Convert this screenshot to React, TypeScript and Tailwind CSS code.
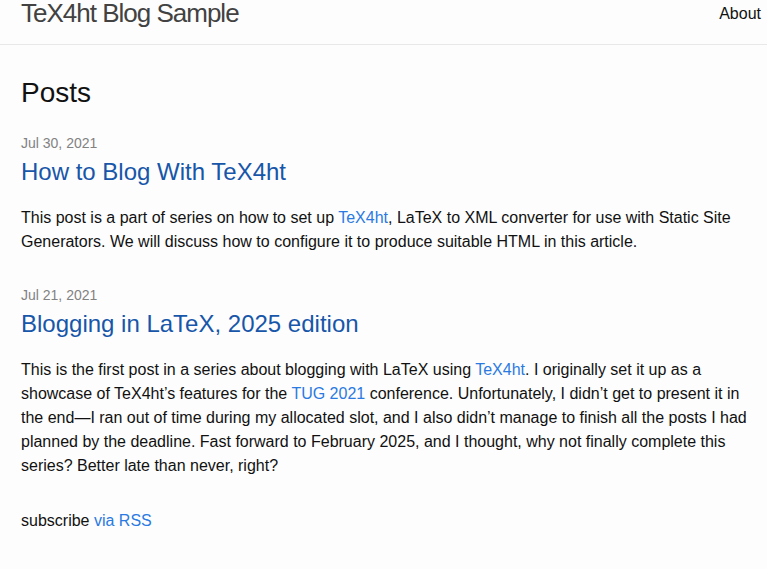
const link = 'text-[#2a7ae2]'

function PostItem({
  date,
  title,
  children,
}: {
  date: string
  title: string
  children: React.ReactNode
}) {
  return (
    <li className="mb-[31px]">
      <span className="block text-[14px] leading-[21px] text-[#828282]">{date}</span>
      <h3 className="text-[24px] leading-[36px] text-[#1756a9]">
        <a href="#">{title}</a>
      </h3>
      <p className="mt-[16px] text-[16px] leading-[24px]">{children}</p>
    </li>
  )
}

export default function App() {
  return (
    <div className="min-h-[569px] bg-[#fdfdfd] text-[#111] font-['Liberation_Sans',Arial,sans-serif]">
      {/* Header */}
      <header className="h-[45px] border-b border-[#e8e8e8] flex items-start justify-between pl-[21px] pr-[6px]">
        <a href="#" className="text-[26px] leading-[26px] tracking-[-1px] text-[#424242]">
          TeX4ht Blog Sample
        </a>
        <nav className="text-[16px] leading-[27px] text-[#111]">
          <a href="#">About</a>
        </nav>
      </header>

      {/* Content */}
      <main className="pl-[21px] pr-[17px] pt-[27px]">
        <h2 className="text-[28px] leading-[42px] mb-[19px]">Posts</h2>
        <ul>
          <PostItem date="Jul 30, 2021" title="How to Blog With TeX4ht">
            This post is a part of series on how to set up <a href="#" className={link}>TeX4ht</a>,
            LaTeX to XML converter for use with Static Site Generators. We will discuss how to
            configure it to produce suitable HTML in this article.
          </PostItem>
          <PostItem date="Jul 21, 2021" title="Blogging in LaTeX, 2025 edition">
            This is the first post in a series about blogging with LaTeX using{' '}
            <a href="#" className={link}>TeX4ht</a>. I originally set it up as a showcase of
            TeX4ht’s features for the <a href="#" className={link}>TUG 2021</a> conference.
            Unfortunately, I didn’t get to present it in the end—I ran out of time during my
            allocated slot, and I also didn’t manage to finish all the posts I had planned by the
            deadline. Fast forward to February 2025, and I thought, why not finally complete this
            series? Better late than never, right?
          </PostItem>
        </ul>
        <p className="text-[16px] leading-[24px]">
          subscribe <a href="#" className={link}>via RSS</a>
        </p>
      </main>
    </div>
  )
}
